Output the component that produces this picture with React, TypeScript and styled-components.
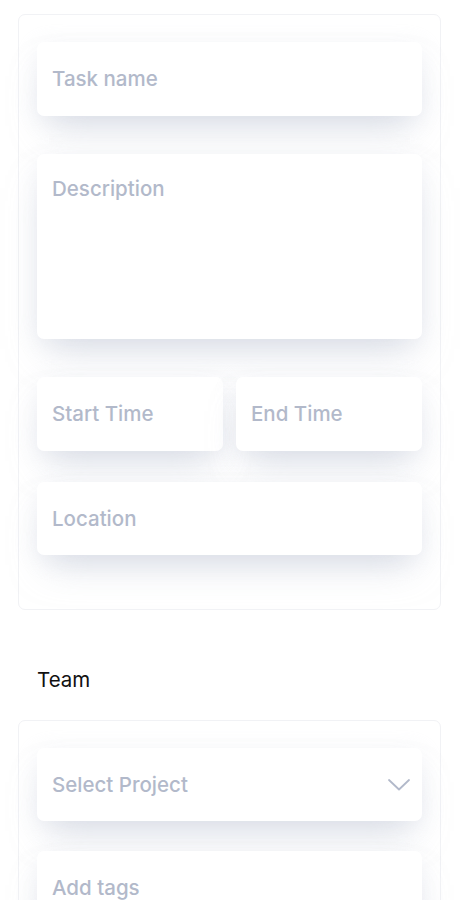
import * as React from 'react';
import styled, { createGlobalStyle } from 'styled-components';

const GlobalStyle = createGlobalStyle`
  html, body {
    margin: 0;
    padding: 0;
    background: #ffffff;
  }
  body {
    font-family: Inter, 'Open Sans', sans-serif;
  }
`;

const Page = styled.div`
  padding: 14px 19px 0 18px;
  display: flex;
  flex-direction: column;
`;

const Card = styled.section<{ $bottom?: number }>`
  border: 1px solid #f1f2f5;
  border-radius: 7px;
  background: #ffffff;
  padding: 27px 18px ${(p) => p.$bottom ?? 54}px 18px;
  display: flex;
  flex-direction: column;
`;

const Field = styled.div<{ $h?: number; $gap?: number; $top?: boolean }>`
  position: relative;
  flex: 0 0 auto;
  height: ${(p) => p.$h ?? 74}px;
  margin-top: ${(p) => p.$gap ?? 0}px;
  background: #ffffff;
  border-radius: 7px;
  box-shadow: 0 22px 36px -12px rgba(190, 196, 212, 0.55),
    0 4px 24px rgba(222, 226, 234, 0.4);
  display: flex;
  align-items: ${(p) => (p.$top ? 'flex-start' : 'center')};
  padding: ${(p) => (p.$top ? '21px 15px 0' : '0 15px')};
  box-sizing: border-box;
`;

const Placeholder = styled.span`
  font-size: 20.5px;
  line-height: 28px;
  font-weight: 450;
  color: #b2b9ca;
  flex: 1;
`;

const Row = styled.div<{ $gap?: number }>`
  display: flex;
  gap: 13px;
  margin-top: ${(p) => p.$gap ?? 0}px;
  & > ${Field} {
    flex: 1 1 0;
  }
`;

const Label = styled.h3`
  margin: 55px 0 25px 19px;
  font-size: 20.5px;
  line-height: 30px;
  font-weight: 400;
  color: #111111;
`;

const Chevron = () => (
  <svg width="22" height="12" viewBox="0 0 22 12" fill="none">
    <path
      d="M1 1 L11 10.5 L21 1"
      stroke="#b2b9ca"
      strokeWidth="1.8"
      strokeLinecap="round"
      strokeLinejoin="round"
    />
  </svg>
);

const ChevronWrap = styled.span`
  display: flex;
  margin-right: -3px;
`;

export default function App() {
  return (
    <>
      <GlobalStyle />
      <Page>
        <Card>
          <Field>
            <Placeholder>Task name</Placeholder>
          </Field>
          <Field $h={185} $gap={38} $top>
            <Placeholder>Description</Placeholder>
          </Field>
          <Row $gap={38}>
            <Field>
              <Placeholder>Start Time</Placeholder>
            </Field>
            <Field>
              <Placeholder>End Time</Placeholder>
            </Field>
          </Row>
          <Field $h={73} $gap={31}>
            <Placeholder>Location</Placeholder>
          </Field>
        </Card>
        <Label>Team</Label>
        <Card>
          <Field $h={73}>
            <Placeholder>Select Project</Placeholder>
            <ChevronWrap>
              <Chevron />
            </ChevronWrap>
          </Field>
          <Field $h={73} $gap={30}>
            <Placeholder>Add tags</Placeholder>
          </Field>
        </Card>
      </Page>
    </>
  );
}
